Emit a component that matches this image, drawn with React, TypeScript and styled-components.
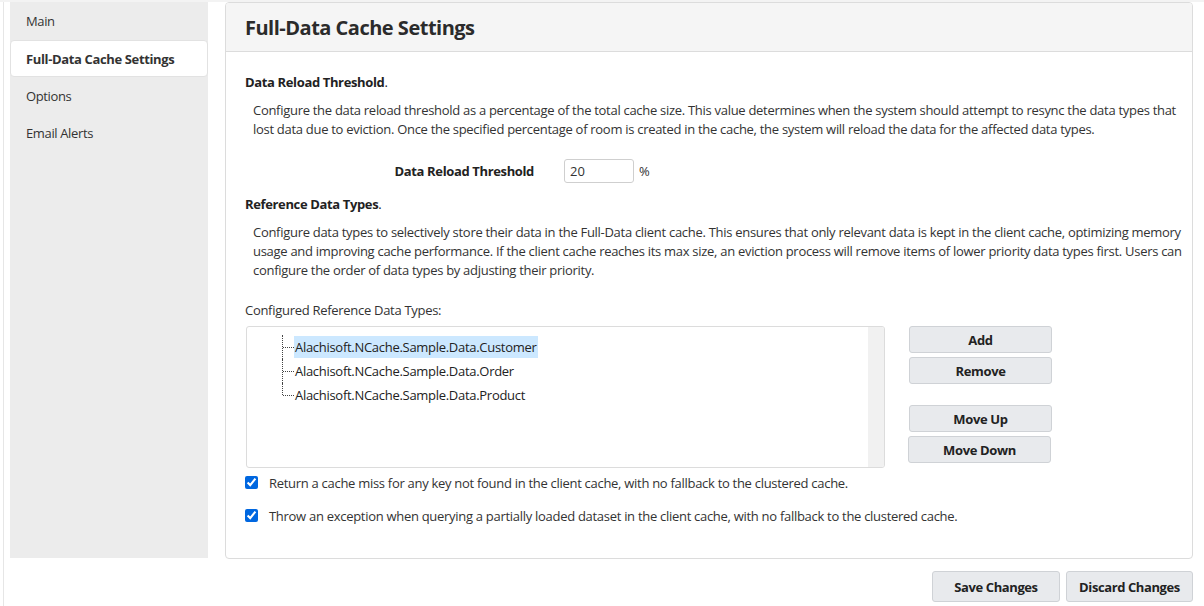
import React from "react";
import styled, { createGlobalStyle, css } from "styled-components";

const GlobalStyle = createGlobalStyle`
  html, body { margin: 0; padding: 0; background: #ffffff; }
  body {
    font-family: "Open Sans", "Noto Sans", "Liberation Sans", sans-serif;
    font-size: 13px;
    color: #333333;
    letter-spacing: -0.29px;
  }
  * { box-sizing: border-box; }
`;

const Root = styled.div`
  width: 1204px;
  height: 606px;
  border-top: 2px solid #f3f3f3;
  overflow: hidden;
`;

const Frame = styled.div`
  margin-left: 3px;
  border-left: 1px solid #e6e6e6;
  padding: 0 11px 0 6px;
  height: 100%;
`;

const Layout = styled.div`
  display: flex;
  gap: 17px;
  align-items: flex-start;
`;

const Sidebar = styled.nav`
  width: 198px;
  height: 556px;
  background: #ececec;
  display: flex;
  flex-direction: column;
  letter-spacing: -0.36px;
`;

const NavItem = styled.div<{ $active?: boolean }>`
  height: 37px;
  display: flex;
  align-items: center;
  padding-left: 16px;
  color: #333;
  ${(p) =>
    p.$active &&
    css`
      margin-top: 1px;
      background: #ffffff;
      font-weight: 700;
      border-radius: 4px;
      border: 1px solid #e2e2e2;
      padding-left: 15px;
    `}
`;

const Panel = styled.section`
  flex: 1;
  height: 557px;
  border: 1px solid #dcdcdc;
  border-radius: 4px;
  overflow: hidden;
  display: flex;
  flex-direction: column;
`;

const PanelHeader = styled.header`
  height: 49px;
  flex: none;
  background: #f5f5f5;
  border-bottom: 1px solid #dcdcdc;
  display: flex;
  align-items: center;
  padding-left: 19px;
  font-size: 20px;
  font-weight: 700;
  color: #2b2b2b;
  letter-spacing: -0.5px;
`;

const PanelBody = styled.div`
  padding: 22px 3px 0 19px;
`;

const SectionTitle = styled.div<{ $gapTop?: number }>`
  font-weight: 700;
  line-height: 17px;
  color: #222;
  letter-spacing: -0.36px;
  margin-top: ${(p) => p.$gapTop ?? 0}px;
`;

const Plain = styled.span`
  font-weight: 400;
`;

const Description = styled.p`
  margin: 10px 0 0 8px;
  line-height: 19px;
`;

const FormRow = styled.div`
  display: grid;
  grid-template-columns: 289px 70px auto;
  column-gap: 30px;
  align-items: center;
  margin-top: 20px;
`;

const Unit = styled.span`
  margin-left: -25px;
`;

const FormLabel = styled.label`
  text-align: right;
  font-weight: 700;
  color: #222;
  letter-spacing: -0.36px;
`;

const NumberInput = styled.input`
  width: 70px;
  height: 24px;
  border: 1px solid #cfcfcf;
  border-radius: 3px;
  padding: 0 5px;
  font: inherit;
  color: #333;
`;

const ListLabel = styled.div`
  margin-top: 22px;
  line-height: 17px;
`;

const ListArea = styled.div`
  display: flex;
  align-items: flex-start;
  margin-top: 7px;
  margin-left: 1px;
`;

const ListBox = styled.div`
  width: 639px;
  height: 142px;
  border: 1px solid #dcdcdc;
  border-radius: 3px;
  display: flex;
  overflow: hidden;
`;

const TreeList = styled.div`
  flex: 1;
  padding: 8px 0 0 35px;
`;

const ScrollGutter = styled.div`
  width: 16px;
  background: #f1f1f1;
`;

const TreeRow = styled.div`
  display: flex;
  align-items: center;
  height: 24px;
`;

const Connector = styled.span<{ $last?: boolean }>`
  position: relative;
  width: 12px;
  height: 24px;
  flex: none;
  &::before {
    content: "";
    position: absolute;
    left: 0;
    top: 0;
    height: ${(p) => (p.$last ? "12px" : "24px")};
    border-left: 1px dotted #444;
  }
  &::after {
    content: "";
    position: absolute;
    left: 1px;
    right: 0;
    top: 12px;
    border-top: 1px dotted #444;
  }
`;

const TreeLabel = styled.span<{ $selected?: boolean }>`
  height: 22px;
  line-height: 22px;
  padding: 0 2px 0 1px;
  color: #222;
  background: ${(p) => (p.$selected ? "#cce8ff" : "transparent")};
`;

const ButtonColumn = styled.div`
  display: flex;
  flex-direction: column;
  margin-left: 24px;
  width: 143px;
`;

const ActionButton = styled.button<{ $gapTop?: number; $shift?: number }>`
  height: 27px;
  width: 143px;
  margin-top: ${(p) => p.$gapTop ?? 0}px;
  margin-left: ${(p) => p.$shift ?? 0}px;
  background: #e8eaed;
  border: 1px solid #cfd2d6;
  border-radius: 3px;
  font: inherit;
  font-weight: 700;
  letter-spacing: -0.36px;
  color: #222;
  padding: 0;
`;

const CheckGroup = styled.div`
  margin-top: -2px;
`;

const CheckRow = styled.label`
  display: flex;
  align-items: center;
  height: 33px;
  gap: 11px;
`;

const CheckBox = styled.input`
  width: 13px;
  height: 13px;
  margin: 0;
  accent-color: #0067e0;
`;

const Footer = styled.div`
  display: flex;
  justify-content: flex-end;
  gap: 6px;
  margin-top: 12px;
`;

const FooterButton = styled.button<{ $w: number }>`
  width: ${(p) => p.$w}px;
  height: 31px;
  background: #e8eaed;
  border: 1px solid #cfd2d6;
  border-radius: 3px;
  font: inherit;
  font-weight: 700;
  letter-spacing: -0.4px;
  color: #222;
`;

const types = [
  "Alachisoft.NCache.Sample.Data.Customer",
  "Alachisoft.NCache.Sample.Data.Order",
  "Alachisoft.NCache.Sample.Data.Product",
];

export default function App() {
  return (
    <>
      <GlobalStyle />
      <Root>
        <Frame>
          <Layout>
            <Sidebar>
              <NavItem>Main</NavItem>
              <NavItem $active>Full-Data Cache Settings</NavItem>
              <NavItem>Options</NavItem>
              <NavItem>Email Alerts</NavItem>
            </Sidebar>
            <Panel>
              <PanelHeader>Full-Data Cache Settings</PanelHeader>
              <PanelBody>
                <SectionTitle>
                  Data Reload Threshold<Plain>.</Plain>
                </SectionTitle>
                <Description>
                  Configure the data reload threshold as a percentage of the total cache size. This value
                  determines when the system should attempt to resync the data types that lost data due to
                  eviction. Once the specified percentage of room is created in the cache, the system will
                  reload the data for the affected data types.
                </Description>
                <FormRow>
                  <FormLabel>Data Reload Threshold</FormLabel>
                  <NumberInput defaultValue="20" />
                  <Unit>%</Unit>
                </FormRow>
                <SectionTitle $gapTop={13}>
                  Reference Data Types<Plain>.</Plain>
                </SectionTitle>
                <Description>
                  Configure data types to selectively store their data in the Full-Data client cache. This
                  ensures that only relevant data is kept in the client cache, optimizing memory usage and
                  improving cache performance. If the client cache reaches its max size, an eviction process
                  will remove items of lower priority data types first. Users can configure the order of data
                  types by adjusting their priority.
                </Description>
                <ListLabel>Configured Reference Data Types:</ListLabel>
                <ListArea>
                  <ListBox>
                    <TreeList>
                      {types.map((t, i) => (
                        <TreeRow key={t}>
                          <Connector $last={i === types.length - 1} />
                          <TreeLabel $selected={i === 0}>{t}</TreeLabel>
                        </TreeRow>
                      ))}
                    </TreeList>
                    <ScrollGutter />
                  </ListBox>
                  <ButtonColumn>
                    <ActionButton>Add</ActionButton>
                    <ActionButton $gapTop={4}>Remove</ActionButton>
                    <ActionButton $gapTop={21}>Move Up</ActionButton>
                    <ActionButton $gapTop={4} $shift={-1}>
                      Move Down
                    </ActionButton>
                  </ButtonColumn>
                </ListArea>
                <CheckGroup>
                  <CheckRow>
                    <CheckBox type="checkbox" defaultChecked />
                    Return a cache miss for any key not found in the client cache, with no fallback to the
                    clustered cache.
                  </CheckRow>
                  <CheckRow>
                    <CheckBox type="checkbox" defaultChecked />
                    Throw an exception when querying a partially loaded dataset in the client cache, with no
                    fallback to the clustered cache.
                  </CheckRow>
                </CheckGroup>
              </PanelBody>
            </Panel>
          </Layout>
          <Footer>
            <FooterButton $w={128}>Save Changes</FooterButton>
            <FooterButton $w={127}>Discard Changes</FooterButton>
          </Footer>
        </Frame>
      </Root>
    </>
  );
}
